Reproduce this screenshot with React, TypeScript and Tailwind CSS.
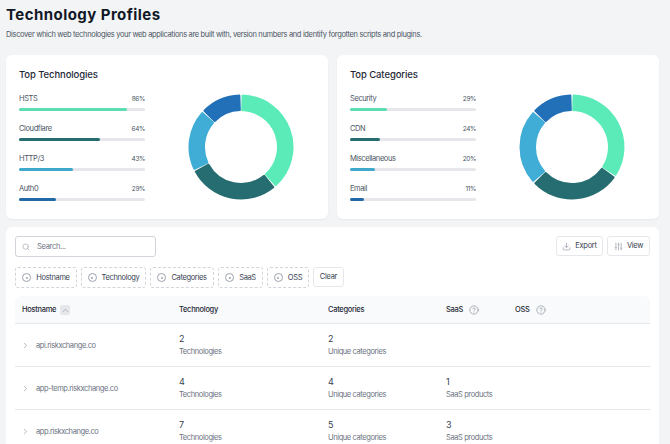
import { ChevronRight, ChevronUp, CircleHelp, Download, Search, SlidersVertical } from "lucide-react";

type Bar = { label: string; value: number; color: string };

const COLORS = ["#5bebb8", "#256d70", "#3fadd6", "#2270b8"];

const technologies: Bar[] = [
  { label: "HSTS", value: 86, color: "bg-[#5ddcb2]" },
  { label: "Cloudflare", value: 64, color: "bg-[#256d70]" },
  { label: "HTTP/3", value: 43, color: "bg-[#3fa9cc]" },
  { label: "Auth0", value: 29, color: "bg-[#2269a8]" },
];

const categories: Bar[] = [
  { label: "Security", value: 29, color: "bg-[#5ddcb2]" },
  { label: "CDN", value: 24, color: "bg-[#256d70]" },
  { label: "Miscellaneous", value: 20, color: "bg-[#3fa9cc]" },
  { label: "Email", value: 11, color: "bg-[#2269a8]" },
];

const rows = [
  { host: "api.riskxchange.co", tech: "2", cats: "2", saas: "" },
  { host: "app-temp.riskxchange.co", tech: "4", cats: "4", saas: "1" },
  { host: "app.riskxchange.co", tech: "7", cats: "5", saas: "3" },
];

function arc(cx: number, cy: number, r0: number, r1: number, from: number, to: number) {
  const pt = (r: number, a: number) => {
    const t = ((a - 90) * Math.PI) / 180;
    return `${(cx + r * Math.cos(t)).toFixed(2)} ${(cy + r * Math.sin(t)).toFixed(2)}`;
  };
  const large = to - from > 180 ? 1 : 0;
  return `M${pt(r1, from)}A${r1} ${r1} 0 ${large} 1 ${pt(r1, to)}L${pt(r0, to)}A${r0} ${r0} 0 ${large} 0 ${pt(r0, from)}Z`;
}

function Donut({ values }: { values: number[] }) {
  const total = values.reduce((a, b) => a + b, 0);
  let start = 0;
  return (
    <svg width="108" height="108" viewBox="0 0 108 108" className="shrink-0">
      {values.map((v, i) => {
        const end = start + (v / total) * 360;
        const d = arc(54, 54, 37, 51.5, start + 1.8, end - 1.8);
        start = end;
        return <path key={i} d={d} fill={COLORS[i]} stroke={COLORS[i]} strokeWidth="2" strokeLinejoin="round" />;
      })}
    </svg>
  );
}

function TopCard({ title, bars }: { title: string; bars: Bar[] }) {
  return (
    <div className="flex h-[164px] w-[322px] flex-col rounded-md bg-white pl-[13px] pt-[14px] shadow-[0_1px_2px_rgba(0,0,0,0.05)]">
      <h2 className="text-[9.5px] leading-[12px] font-medium tracking-[-0.1px] text-[#1f2937]">{title}</h2>
      <div className="flex">
        <div className="w-[126px] pt-[12px]">
          {bars.map((b) => (
            <div key={b.label} className="mb-[11px] h-[19px]">
              <div className="flex h-[12px] items-baseline justify-between text-[7.5px] tracking-[-0.4px] text-[#4b5563]">
                <span>{b.label}</span>
                <span className="text-[6.5px]">{b.value}%</span>
              </div>
              <div className="mt-[3px] h-[3px] w-full rounded-full bg-[#e5e7eb]">
                <div className={`h-full rounded-full ${b.color}`} style={{ width: `${b.value}%` }} />
              </div>
            </div>
          ))}
        </div>
        <div className="ml-[42px] mt-[12px]">
          <Donut values={bars.map((b) => b.value)} />
        </div>
      </div>
    </div>
  );
}

function FilterChip({ label, width }: { label: string; width: string }) {
  return (
    <div className={`flex h-[21px] items-center justify-center gap-[5px] rounded-[3px] border border-dashed border-[#d1d5db] text-[7.5px] tracking-[-0.35px] text-[#374151] ${width}`}>
      <span className="flex h-[9px] w-[9px] items-center justify-center rounded-full border border-[#9ca3af]">
        <span className="h-[2px] w-[2px] rounded-full bg-[#9ca3af]" />
      </span>
      {label}
    </div>
  );
}

const cols = "grid grid-cols-[164px_149px_118px_69px_1fr]";

export default function App() {
  return (
    <div className="h-[444px] w-[670px] overflow-hidden bg-[#f3f4f6] pl-[6px] pr-[11px] font-['Inter',sans-serif]">
      <h1 className="pt-[4px] text-[15px] leading-[22px] font-bold tracking-[0.45px] text-[#111827]">Technology Profiles</h1>
      <p className="mt-[3px] text-[7.5px] leading-[12px] tracking-[-0.34px] whitespace-nowrap text-[#4b5563]">
        Discover which web technologies your web applications are built with, version numbers and identify forgotten scripts and plugins.
      </p>

      <div className="mt-[14px] flex gap-[9px]">
        <TopCard title="Top Technologies" bars={technologies} />
        <TopCard title="Top Categories" bars={categories} />
      </div>

      <div className="mt-[8px] h-[300px] rounded-md bg-white px-[9px] pt-[9px]">
        <div className="flex items-start justify-between">
          <div className="flex h-[21px] w-[141px] items-center gap-[5px] rounded-[3px] border border-[#d1d5db] px-[6px] text-[7.5px] tracking-[-0.3px] text-[#6b7280]">
            <Search size={8} className="text-[#9ca3af]" />
            <span className="ml-[2px]">Search...</span>
          </div>
          <div className="flex gap-[4px]">
            <div className="flex h-[20px] w-[47px] items-center justify-center gap-[4px] rounded-[3px] border border-[#e5e7eb] text-[7.5px] tracking-[-0.3px] text-[#374151]">
              <Download size={9} className="text-[#9ca3af]" />
              Export
            </div>
            <div className="flex h-[20px] w-[43px] items-center justify-center gap-[4px] rounded-[3px] border border-[#e5e7eb] text-[7.5px] tracking-[-0.3px] text-[#374151]">
              <SlidersVertical size={9} className="text-[#9ca3af]" />
              View
            </div>
          </div>
        </div>

        <div className="mt-[10px] flex gap-[4px]">
          <FilterChip label="Hostname" width="w-[62px]" />
          <FilterChip label="Technology" width="w-[65px]" />
          <FilterChip label="Categories" width="w-[64px]" />
          <FilterChip label="SaaS" width="w-[45px]" />
          <FilterChip label="OSS" width="w-[42px]" />
          <div className="flex h-[20px] w-[31px] items-center justify-center rounded-[3px] border border-[#e5e7eb] text-[7.5px] tracking-[-0.3px] text-[#374151]">Clear</div>
        </div>

        <div className="mt-[8px]">
          <div className={`${cols} h-[28px] items-center rounded-t-md border-b border-[#e5e7eb] bg-[#f9fafb] pt-[1px] text-[7.5px] font-medium tracking-[-0.3px] text-[#1f2937]`}>
            <div className="flex items-center gap-[4px] pl-[7px]">
              Hostname
              <span className="flex h-[10px] w-[10px] items-center justify-center rounded-[2px] bg-[#e5e7eb]">
                <ChevronUp size={9} className="text-[#9ca3af]" />
              </span>
            </div>
            <div>Technology</div>
            <div>Categories</div>
            <div className="flex items-center gap-[6px]">
              SaaS
              <CircleHelp size={10} className="text-[#9ca3af]" />
            </div>
            <div className="flex items-center gap-[6px]">
              OSS
              <CircleHelp size={10} className="text-[#9ca3af]" />
            </div>
          </div>
          {rows.map((r) => (
            <div key={r.host} className={`${cols} h-[43px] items-center border-b border-[#e5e7eb] pt-[1px] text-[7.5px] tracking-[-0.4px] text-[#6b7280]`}>
              <div className="flex items-center gap-[6px] pl-[6px]">
                <ChevronRight size={9} className="text-[#9ca3af]" />
                {r.host}
              </div>
              <div>
                <div className="text-[9px] leading-[12px] text-[#374151]">{r.tech}</div>
                <div className="leading-[13px]">Technologies</div>
              </div>
              <div>
                <div className="text-[9px] leading-[12px] text-[#374151]">{r.cats}</div>
                <div className="leading-[13px]">Unique categories</div>
              </div>
              <div>
                {r.saas && (
                  <>
                    <div className="text-[9px] leading-[12px] text-[#374151]">{r.saas}</div>
                    <div className="leading-[13px]">SaaS products</div>
                  </>
                )}
              </div>
              <div />
            </div>
          ))}
        </div>
      </div>
    </div>
  );
}
